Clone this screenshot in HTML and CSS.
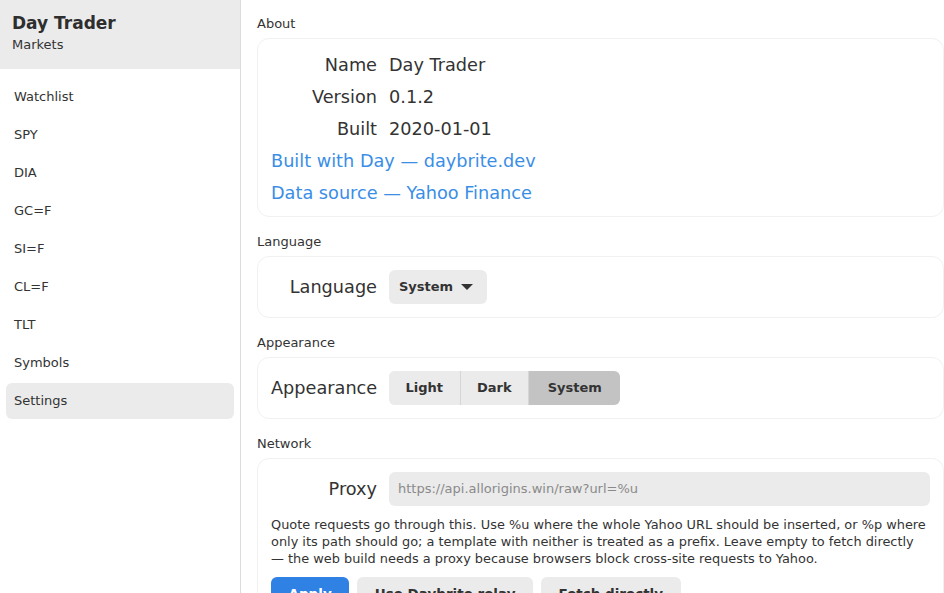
FILE: index.html
```html
<!DOCTYPE html>
<html lang="en">
<head>
<meta charset="utf-8">
<title>Day Trader — Settings</title>
<link rel="stylesheet" href="styles.css">
</head>
<body>
<div class="app">
  <aside class="sidebar">
    <div class="brand">
      <div class="brand-title">Day Trader</div>
      <div class="brand-sub">Markets</div>
    </div>
    <nav class="nav">
      <div class="nav-item">Watchlist</div>
      <div class="nav-item">SPY</div>
      <div class="nav-item">DIA</div>
      <div class="nav-item">GC=F</div>
      <div class="nav-item">SI=F</div>
      <div class="nav-item">CL=F</div>
      <div class="nav-item">TLT</div>
      <div class="nav-item">Symbols</div>
      <div class="nav-item active">Settings</div>
    </nav>
  </aside>
  <main class="main">
    <section class="section">
      <div class="section-label">About</div>
      <div class="card card-about">
        <div class="row"><div class="row-label">Name</div><div class="row-value">Day Trader</div></div>
        <div class="row"><div class="row-label">Version</div><div class="row-value">0.1.2</div></div>
        <div class="row"><div class="row-label">Built</div><div class="row-value">2020-01-01</div></div>
        <div class="row"><a class="link">Built with Day — daybrite.dev</a></div>
        <div class="row"><a class="link">Data source — Yahoo Finance</a></div>
      </div>
    </section>
    <section class="section">
      <div class="section-label">Language</div>
      <div class="card card-control">
        <div class="row control-row">
          <div class="row-label">Language</div>
          <button class="dropdown">System <span class="caret"></span></button>
        </div>
      </div>
    </section>
    <section class="section">
      <div class="section-label">Appearance</div>
      <div class="card card-control">
        <div class="row control-row">
          <div class="row-label">Appearance</div>
          <div class="segmented">
            <button class="seg">Light</button>
            <button class="seg">Dark</button>
            <button class="seg selected">System</button>
          </div>
        </div>
      </div>
    </section>
    <section class="section">
      <div class="section-label">Network</div>
      <div class="card card-control">
        <div class="row control-row">
          <div class="row-label">Proxy</div>
          <input class="input" type="text" placeholder="https://api.allorigins.win/raw?url=%u">
        </div>
        <p class="help">Quote requests go through this. Use %u where the whole Yahoo URL should be inserted, or %p where only its path should go; a template with neither is treated as a prefix. Leave empty to fetch directly — the web build needs a proxy because browsers block cross-site requests to Yahoo.</p>
        <div class="actions">
          <button class="btn primary">Apply</button>
          <button class="btn">Use Daybrite relay</button>
          <button class="btn">Fetch directly</button>
        </div>
      </div>
    </section>
  </main>
</div>
</body>
</html>
```
FILE: styles.css
```css
* { box-sizing: border-box; }
html, body {
  margin: 0;
  height: 100%;
  overflow: hidden;
}
body {
  font-family: "DejaVu Sans", sans-serif;
  color: #333333;
  background: #ffffff;
}
.app {
  display: flex;
  height: 100%;
}
.sidebar {
  width: 241px;
  flex: 0 0 241px;
  border-right: 1px solid #dcdcdc;
  display: flex;
  flex-direction: column;
}
.brand {
  background: #ebebeb;
  height: 69px;
  padding: 13px 12px 0 12px;
}
.brand-title {
  font-size: 17px;
  font-weight: bold;
  line-height: 20px;
  color: #2e2e2e;
}
.brand-sub {
  font-size: 13px;
  line-height: 16px;
  margin-top: 4px;
  color: #333;
}
.nav {
  display: flex;
  flex-direction: column;
  gap: 2px;
  padding: 10px 6px 0 6px;
}
.nav-item {
  height: 36px;
  line-height: 36px;
  padding: 0 8px;
  font-size: 13px;
  border-radius: 6px;
  color: #333;
}
.nav-item.active {
  background: #ebebeb;
}
.main {
  flex: 1;
  padding: 16px 0 0 16px;
  display: flex;
  flex-direction: column;
  gap: 17px;
  min-width: 0;
}
.section-label {
  font-size: 13px;
  line-height: 16px;
  margin-bottom: 6px;
  color: #333;
}
.card {
  border: 1px solid #f1f1f1;
  border-radius: 12px;
  padding: 9px 13px 8px 13px;
  background: #fff;
}
.card-about {
  padding-top: 10px;
  padding-bottom: 7px;
}
.card-control {
  padding-top: 8px;
  padding-bottom: 9px;
}
.row {
  display: flex;
  align-items: center;
  height: 32px;
  font-size: 17.7px;
}
.control-row {
  height: 43px;
}
.row-label {
  width: 106px;
  text-align: right;
  margin-right: 12px;
  flex: 0 0 106px;
  color: #333;
  white-space: nowrap;
}
.row-value { color: #333; }
.link {
  color: #3a8ee6;
  text-decoration: none;
  cursor: pointer;
}
button {
  font-family: "DejaVu Sans", sans-serif;
}
.dropdown {
  height: 34px;
  border: none;
  border-radius: 6px;
  background: #ebebeb;
  font-size: 13px;
  font-weight: bold;
  color: #333;
  padding: 0 14px 0 10px;
  display: flex;
  align-items: center;
  gap: 8px;
}
.caret {
  width: 0;
  height: 0;
  border-left: 6px solid transparent;
  border-right: 6px solid transparent;
  border-top: 6px solid #333;
}
.segmented {
  display: flex;
  height: 34px;
  border-radius: 6px;
  overflow: hidden;
  background: #ebebeb;
}
.seg {
  border: none;
  background: #ebebeb;
  font-size: 13px;
  font-weight: bold;
  color: #333;
  padding: 0 16.5px;
  height: 100%;
}
.seg + .seg {
  border-left: 1px solid #d6d6d6;
}
.seg.selected {
  background: #c3c3c3;
  padding: 0 18px 0 18.5px;
}
.input {
  flex: 1;
  height: 34px;
  border: none;
  border-radius: 6px;
  background: #ebebeb;
  font-family: "DejaVu Sans", sans-serif;
  font-size: 13px;
  padding: 0 9px;
  color: #333;
  min-width: 0;
}
.input::placeholder {
  color: #8a8a8a;
}
.help {
  margin: 6px 0 0 0;
  font-size: 12.9px;
  line-height: 17px;
  color: #333;
}
.actions {
  display: flex;
  gap: 8px;
  margin-top: 10px;
}
.btn {
  height: 34px;
  border: none;
  border-radius: 6px;
  background: #ebebeb;
  font-size: 13.5px;
  font-weight: bold;
  color: #333;
  padding: 0 17.5px;
}
.btn.primary {
  background: #2f81e4;
  color: #fff;
}
```
